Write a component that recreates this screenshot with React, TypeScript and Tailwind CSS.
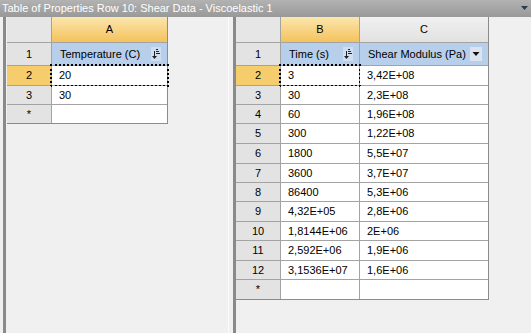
import React from 'react';

const font = { fontFamily: '"Liberation Sans", Arial, sans-serif' };

function SortIcon() {
  return (
    <svg width="10" height="14" viewBox="0 0 10 14" className="shrink-0">
      <rect x="0" y="0" width="10" height="14" fill="#cfdff1" />
      <line x1="5" y1="2.5" x2="7" y2="2.5" stroke="#222" strokeWidth="1" />
      <line x1="5" y1="4.5" x2="8" y2="4.5" stroke="#222" strokeWidth="1" />
      <line x1="5" y1="6.5" x2="9" y2="6.5" stroke="#222" strokeWidth="1" />
      <line x1="3.5" y1="4" x2="3.5" y2="9" stroke="#222" strokeWidth="1" />
      <path d="M1 9 L6 9 L3.5 12 Z" fill="#222" />
    </svg>
  );
}

function DropIcon() {
  return (
    <svg width="12" height="14" viewBox="0 0 12 14" className="shrink-0">
      <rect x="0" y="0" width="12" height="14" fill="#dbe4ee" />
      <path d="M2.5 5 L9.5 5 L6 9 Z" fill="#111" />
    </svg>
  );
}

interface Col {
  label: string;
  width: number;
  head: string;
  icon: 'sort' | 'drop';
  selected: boolean;
}

function PropTable({
  numWidth,
  cols,
  rows,
  heights,
}: {
  numWidth: number;
  cols: Col[];
  rows: string[][];
  heights: number[];
}) {
  const template = `${numWidth}px ${cols.map((c) => c.width + 'px').join(' ')}`;
  const rowTemplate = ['25px', '22px', ...heights.map((h) => h + 'px')].join(' ');
  return (
    <div
      className="grid gap-px self-start border-b border-r border-[#8c8c8c] bg-[#a3a3a3] text-[11px] text-black"
      style={{ gridTemplateColumns: template, gridTemplateRows: rowTemplate }}
    >
      <div className="bg-[#e6e6e6]" />
      {cols.map((c) => (
        <div
          key={c.label}
          className={
            c.selected
              ? 'flex items-center justify-center bg-gradient-to-b from-[#fbe6ac] to-[#f4c25a]'
              : 'flex items-center justify-center bg-gradient-to-b from-[#f0f0f0] to-[#e2e2e2]'
          }
        >
          {c.label}
        </div>
      ))}

      <div className="flex items-center justify-center bg-[#e3e3e3]">1</div>
      {cols.map((c) => (
        <div key={c.head} className="flex items-center justify-between bg-[#b7cfea] pl-[8px] pr-[6px]">
          <span>{c.head}</span>
          {c.icon === 'sort' ? <SortIcon /> : <DropIcon />}
        </div>
      ))}

      {rows.map((r, i) => (
        <React.Fragment key={i}>
          <div
            className={
              i === 0
                ? 'flex items-center justify-center bg-[#f6cd6c]'
                : 'flex items-center justify-center bg-[#e3e3e3]'
            }
          >
            {i === rows.length - 1 ? '*' : i + 2}
          </div>
          {r.map((v, j) => (
            <div
              key={j}
              className={
                i === 0 && j === 0
                  ? 'flex items-center bg-white pl-[7px] outline-2 outline-dotted outline-black'
                  : 'flex items-center bg-white pl-[7px]'
              }
            >
              {v}
            </div>
          ))}
        </React.Fragment>
      ))}
    </div>
  );
}

const rightRows = [
  ['3', '3,42E+08'],
  ['30', '2,3E+08'],
  ['60', '1,96E+08'],
  ['300', '1,22E+08'],
  ['1800', '5,5E+07'],
  ['3600', '3,7E+07'],
  ['86400', '5,3E+06'],
  ['4,32E+05', '2,8E+06'],
  ['1,8144E+06', '2E+06'],
  ['2,592E+06', '1,9E+06'],
  ['3,1536E+07', '1,6E+06'],
  ['', ''],
];

export default function App() {
  return (
    <div className="flex h-[333px] w-[531px] flex-col overflow-hidden bg-[#f0f0f0]" style={font}>
      <div className="flex h-[17px] shrink-0 items-center justify-between bg-gradient-to-b from-[#b2b2b2] to-[#999999] pl-[2px] pr-[3px] text-[11px] text-white">
        <span>Table of Properties Row 10: Shear Data - Viscoelastic 1</span>
        <svg width="7" height="5" viewBox="0 0 7 5">
          <path d="M0 0 L7 0 L3.5 4 Z" fill="#2c3a4e" />
        </svg>
      </div>
      <div className="flex flex-1">
        <div className="ml-[3px] flex w-[226px] border-l-[3px] border-r border-l-[#8a8a8a] border-r-[#fbfbfb] pl-px">
          <PropTable
            numWidth={44}
            cols={[{ label: 'A', width: 115, head: 'Temperature (C)', icon: 'sort', selected: true }]}
            rows={[['20'], ['30'], ['']]}
            heights={[19, 18, 18]}
          />
        </div>
        <div className="ml-[4px] flex flex-1 border-l-[3px] border-l-[#8a8a8a]">
          <PropTable
            numWidth={44}
            cols={[
              { label: 'B', width: 78, head: 'Time (s)', icon: 'sort', selected: true },
              { label: 'C', width: 128, head: 'Shear Modulus (Pa)', icon: 'drop', selected: false },
            ]}
            rows={rightRows}
            heights={[19, 18, 18, 19, 19, 18, 18, 19, 18, 19, 18, 19]}
          />
        </div>
      </div>
    </div>
  );
}
